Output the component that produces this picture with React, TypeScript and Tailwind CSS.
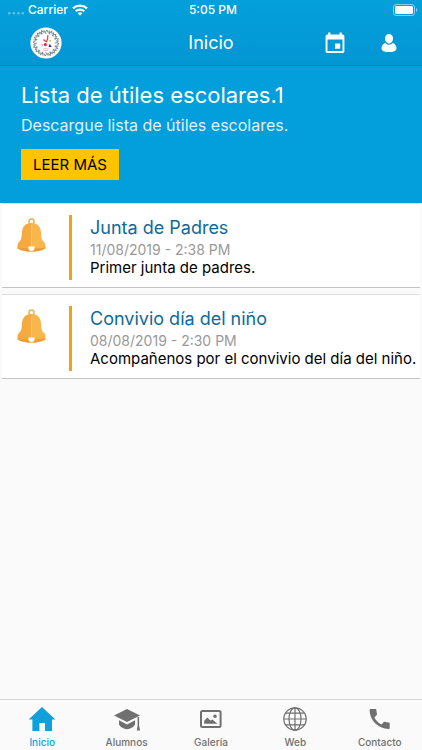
import { useState } from 'react'
import type { ReactNode } from 'react'

interface Notice {
  id: number
  title: string
  date: string
  text: string
}

const NOTICES: Notice[] = [
  { id: 1, title: 'Junta de Padres', date: '11/08/2019 - 2:38 PM', text: 'Primer junta de padres.' },
  { id: 2, title: 'Convivio día del niño', date: '08/08/2019 - 2:30 PM', text: 'Acompañenos por el convivio del día del niño.' },
]

// Radial marks around the school badge
const BADGE_MARKS = Array.from({ length: 16 }, (_, i) => i * 22.5)

function StatusBar() {
  return (
    <div className="grid h-5 grid-cols-3 items-center pr-1 pl-2 text-[12px] leading-5 font-medium">
      <div className="flex items-center gap-1">
        <svg width="16" height="4" viewBox="0 0 16 4" fill="#fff" opacity="0.35" className="mt-2">
          <rect x="0" y="0" width="2.6" height="2.6" rx="0.8" />
          <rect x="4.6" y="0" width="2.6" height="2.6" rx="0.8" />
          <rect x="9.2" y="0" width="2.6" height="2.6" rx="0.8" />
          <rect x="13.4" y="0" width="2.6" height="2.6" rx="0.8" />
        </svg>
        <span>Carrier</span>
        <svg width="16" height="12" viewBox="0 0 16 12" fill="none" stroke="#fff" strokeWidth="2.2">
          <path d="M1 4.4a10.2 10.2 0 0 1 14 0" />
          <path d="M3.7 7.3a6.3 6.3 0 0 1 8.600 0" />
          <path d="M8 11.8 5.6 9.3a3.5 3.5 0 0 1 4.8 0z" fill="#fff" stroke="none" />
        </svg>
      </div>
      <span className="text-center">5:05 PM</span>
      <svg width="25" height="12" viewBox="0 0 25 12" className="justify-self-end">
        <rect x="0.5" y="0.5" width="21" height="11" rx="2.6" fill="none" stroke="#fff" strokeOpacity="0.5" />
        <rect x="2" y="2" width="18" height="8" rx="1.4" fill="#fff" />
        <path d="M23 4v4c.8-.3 1.3-1.1 1.3-2S23.8 4.3 23 4z" fill="#fff" fillOpacity="0.5" />
      </svg>
    </div>
  )
}

function SchoolBadge() {
  return (
    <svg width="32" height="32" viewBox="0 0 32 32" role="img" aria-label="Escuela">
      <circle cx="16" cy="16" r="15.6" fill="#fff" />
      <g fill="none" stroke="#7b8a90" strokeWidth="1">
        {BADGE_MARKS.map(angle => (
          <path key={angle} d="M13.8 3.200l1.6 2.2 1.4-2.4 1.6 2.6M14.6 5.8l2 .4" transform={`rotate(${angle} 16 16)`} />
        ))}
      </g>
      <path d="M17.8 8.200c.4 2.8-.4 5-1.4 7M13.4 12.6l2.6 2.2" fill="none" stroke="#e8415c" strokeWidth="1.3" />
      <circle cx="15.4" cy="17.6" r="1.6" fill="#d9304f" />
      <path d="M18.8 14l1.8-1.4.2 2.200z" fill="#8cc63f" />
      <path d="M18.4 20l1.4-3.2 2 3.2z" fill="#3f3a8c" />
      <circle cx="12.2" cy="18" r="1" fill="#f0a6b8" />
      <path d="M13 21.8h6M14 23.6h4" stroke="#f2b9c4" strokeWidth="1" />
    </svg>
  )
}

function Header() {
  return (
    <header className="border-b border-[#0785c1] bg-linear-to-b from-[#03a0dc] to-[#0396d3] text-white">
      <StatusBar />
      <div className="grid h-[45px] grid-cols-3 items-center">
        <a href="#inicio" className="ml-[30px] w-8">
          <SchoolBadge />
        </a>
        <h1 className="text-center text-[18px] leading-6">Inicio</h1>
        <div className="flex items-center justify-end gap-[34px] pr-6">
          <button type="button" aria-label="Calendario">
            <svg width="22" height="22" viewBox="0 0 22 22" fill="#fff">
              <path fillRule="evenodd" d="M4.200 .6h2.200v1.800h9.200V.6h2.200v1.800h.8c1 0 1.800.8 1.800 1.800v15c0 1-.8 1.800-1.800 1.800H3.400c-1 0-1.800-.8-1.800-1.800v-15c0-1 .8-1.800 1.800-1.800h.8zM3.500 7.400v11.700h15V7.400z" />
              <rect x="11" y="11.6" width="5.2" height="5.2" rx="0.6" />
            </svg>
          </button>
          <button type="button" aria-label="Perfil">
            <svg width="18" height="22" viewBox="0 0 18 22" fill="#fff">
              <path d="M9 2c2.4 0 4 1.8 4 4.4C13 9 11.2 11.4 9 11.4S5 9 5 6.4C5 3.8 6.6 2 9 2z" />
              <path d="M5.4 11C6.4 12.200 7.6 12.8 9 12.800s2.600-.6 3.600-1.800c2.400.7 3.900 2.900 3.900 5.400 0 2.400-2.900 3.600-7.500 3.600s-7.500-1.200-7.500-3.600c0-2.500 1.500-4.700 3.900-5.400z" />
            </svg>
          </button>
        </div>
      </div>
    </header>
  )
}

function Banner() {
  return (
    <section className="bg-[#029fdc] px-[21px] pt-[15px] pb-[23px] text-white">
      <h2 className="text-[22px] leading-7">Lista de útiles escolares.1</h2>
      <p className="mt-1 text-[16px] leading-6 text-[#dff4fc]">Descargue lista de útiles escolares.</p>
      <button type="button" className="mt-3 block h-[31px] bg-[#ffc400] px-3 text-[15px] leading-5 text-black">
        LEER MÁS
      </button>
    </section>
  )
}

function BellIcon() {
  return (
    <svg width="30" height="34" viewBox="0 0 30 34" className="mt-[3px] shrink-0" aria-hidden="true">
      <circle cx="14.5" cy="3.6" r="2.6" fill="none" stroke="#f5b04a" strokeWidth="1.5" />
      <path d="M14.5 5C8.200 5 5.300 9 5 14.500c-.2 5-.8 7.500-3 9.500C.5 25.600.2 28 .6 30.400 4.400 32.600 9 33.600 14.500 33.600z" fill="#f5a93f" />
      <path d="M14.500 5c6.300 0 9.200 4 9.500 9.500.2 5 .8 7.500 3 9.500 1.500 1.600 1.800 4 1.400 6.400-3.800 2.200-8.400 3.200-13.900 3.200z" fill="#f8b64c" />
      <path d="M.6 29.600c4.200 1 23.600 1 27.800 0v.8c-8 4.200-19.800 4.200-27.800 0z" fill="#f09c35" />
      <path d="M11.400 28.400h6.200v1.400a3.100 3.100 0 0 1-6.200 0z" fill="#fff" />
    </svg>
  )
}

function NoticeCard({ notice }: { notice: Notice }) {
  return (
    <article className="mx-0.5 flex border-y border-t-[#dedede] border-b-[#c4c4c4] bg-white pt-[11px] pb-[7px] pl-[15px]">
      <BellIcon />
      <div className="ml-[22px] min-w-0 flex-1 border-l-3 border-[#eba417] pb-[3px] pl-[18px]">
        <h3 className="text-[18px] leading-[26px] text-[#0e6a9b]">{notice.title}</h3>
        <p className="text-[14px] leading-[18px] text-[#999999]">{notice.date}</p>
        <p className="text-[15px] leading-[18px] text-black">{notice.text}</p>
      </div>
    </article>
  )
}

const TABS: { name: string; icon: ReactNode }[] = [
  {
    name: 'Inicio',
    icon: <path d="M14 1 27.4 13.4H24V25h-7v-8h-5.600v8H4.4V13.4H.6z" fill="currentColor" />,
  },
  {
    name: 'Alumnos',
    icon: (
      <g fill="currentColor">
        <path d="M14 3 27 9.4 14 16 1 9.4z" />
        <path d="M6 14.200l8 4.200 8-4.200v4.400c-1.600 2.800-4.600 4.600-8 4.600s-6.400-1.800-8-4.600z" />
        <path d="M24.600 11h1.500v8.600l.9 5h-3.200l.8-5z" />
      </g>
    ),
  },
  {
    name: 'Galería',
    icon: (
      <g>
        <rect x="4" y="5" width="19.600" height="16" rx="1.500" fill="none" stroke="currentColor" strokeWidth="2" />
        <path d="M7.200 17.800v-3l3.200-3.400 2.800 3.200 2.200-1 5 4.200z" fill="currentColor" />
        <circle cx="18" cy="10.200" r="1.700" fill="currentColor" />
      </g>
    ),
  },
  {
    name: 'Web',
    icon: (
      <g fill="none" stroke="currentColor" strokeWidth="1.200">
        <circle cx="14" cy="13" r="11.200" />
        <ellipse cx="14" cy="13" rx="6" ry="11.200" />
        <path d="M14 1.800v22.400M2.800 13h22.400M4.600 7.200h18.800M4.600 18.800h18.800" />
      </g>
    ),
  },
  {
    name: 'Contacto',
    icon: (
      <path
        d="M4.600 3h4.800c.6 0 1 .5 1 1 0 1.400.2 2.600.6 3.800.1.4 0 .8-.2 1.100L8.400 11.400c1.600 3 4 5.400 7 7l2.400-2.400c.3-.3.7-.4 1.100-.2 1.200.4 2.500.6 3.800.6.600 0 1 .4 1 1v4.600c0 .6-.4 1-1 1C12 22.700 3.600 14.300 3.600 4c0-.5.4-1 1-1z"
        fill="currentColor"
      />
    ),
  },
]

function TabBar() {
  const [active, setActive] = useState('Inicio')
  return (
    <nav className="grid h-[51px] shrink-0 grid-cols-5 border-t border-[#d4d4d4] bg-[#fafafa]">
      {TABS.map(tab => (
        <button
          key={tab.name}
          type="button"
          onClick={() => setActive(tab.name)}
          className={`flex flex-col items-center gap-1 pt-1.5 ${active === tab.name ? 'text-[#129fdb]' : 'text-[#707070]'}`}
        >
          <svg width="28" height="26" viewBox="0 0 28 26" aria-hidden="true">
            {tab.icon}
          </svg>
          <span className="text-[10px] leading-3 font-medium">{tab.name}</span>
        </button>
      ))}
    </nav>
  )
}

export default function App() {
  return (
    <div className="flex h-screen flex-col bg-[#fafafa] font-['Inter','Liberation_Sans',sans-serif]">
      <Header />
      <main className="min-h-0 flex-1 overflow-y-auto">
        <Banner />
        <div className="flex flex-col gap-1.5">
          {NOTICES.map(notice => (
            <NoticeCard key={notice.id} notice={notice} />
          ))}
        </div>
      </main>
      <TabBar />
    </div>
  )
}
